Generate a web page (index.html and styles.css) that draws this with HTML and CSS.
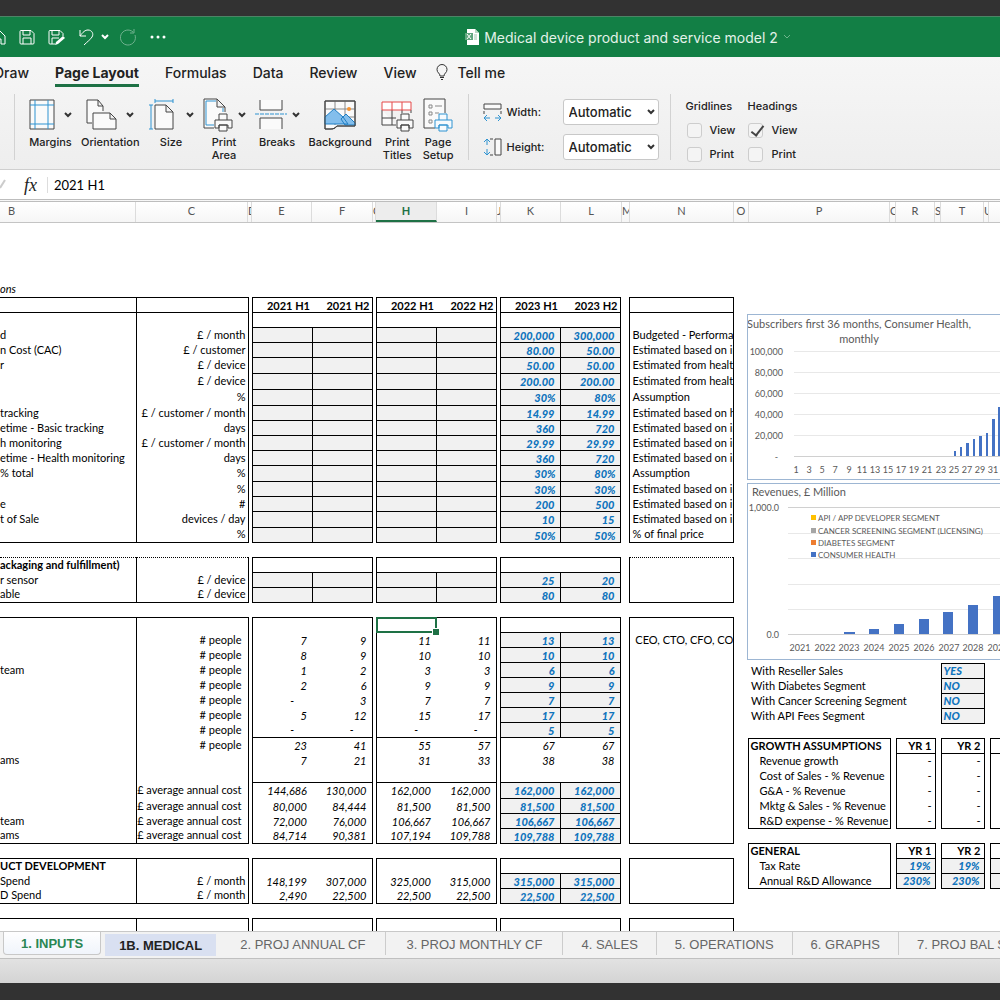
FILE: index.html
```html
<!DOCTYPE html>
<html lang="en">
<head>
    <meta charset="UTF-8">
    <meta name="viewport" content="width=device-width, initial-scale=1.0">
    <title>Medical device product and service model 2</title>
    <link rel="stylesheet" href="styles.css">
</head>
<body>
    <header class="titlebar">
        <div class="quick-actions">
            <button class="quick-btn home" aria-label="Home"><svg width="6" height="18" viewBox="0 0 6 18"><path d="M0 3l5 5v8H1v-5H0"/></svg></button>
            <button class="quick-btn" aria-label="Save"><svg width="16" height="18" viewBox="0 0 16 18"><path d="M1 3.500q0-1 1-1h10l3 3V15q0 1-1 1H2q-1 0-1-1zM4 2.500V7h7V2.500M4 16v-6h8v6"/></svg></button>
            <button class="quick-btn" aria-label="Save as"><svg width="18" height="18" viewBox="0 0 18 18"><path d="M7 16H2q-1 0-1-1V3.500q0-1 1-1h10l3 3V8M4 2.500V7h7V2.500M4 16v-6h7"/><path class="solid" d="M15 8l2 2-7 6-3 1 1-3z"/></svg></button>
            <button class="quick-btn undo" aria-label="Undo"><svg width="16" height="18" viewBox="0 0 16 18"><path d="M1 2v6h6M1 8c3-4 5-6 8-6 4 0 6 4 4 7-1 2-5 5-8 8"/></svg></button>
            <button class="quick-btn history" aria-label="Undo history"><svg width="8" height="6" viewBox="0 0 8 6"><path class="thick" d="M1 1l3 3 3-3"/></svg></button>
            <button class="quick-btn faded" aria-label="Redo" disabled><svg width="18" height="18" viewBox="0 0 18 18"><path d="M14 4A7.500 7.500 0 1 0 16 7M15 1v4h-4"/></svg></button>
            <button class="quick-btn" aria-label="More"><svg width="16" height="4" viewBox="0 0 16 4"><g class="solid"><circle cx="2" cy="2" r="1.500"/><circle cx="8" cy="2" r="1.500"/><circle cx="14" cy="2" r="1.500"/></g></svg></button>
        </div>
        <div class="doc-title">
            <svg width="14" height="16" viewBox="0 0 14 16"><path fill="#fff" d="M2 0h8l4 4v12H2z"/><path fill="#b7d8c4" d="M10 0v4h4z"/><path fill="#5fa67e" d="M0 4h8v7H0z"/><path stroke="#fff" d="M2 5l4 5M6 5l-4 5"/><path stroke="#9cc9ae" d="M9 6h3M9 8h3M9 10h3"/></svg>
            <h1>Medical device product and service model 2</h1>
            <svg width="8" height="6" viewBox="0 0 8 6"><path fill="none" stroke="#6fb48c" d="M1 1l3 3 3-3"/></svg>
        </div>
    </header>

    <section class="ribbon">
        <nav class="ribbon-tabs">
            <button>Draw</button>
            <button class="active">Page Layout</button>
            <button>Formulas</button>
            <button>Data</button>
            <button>Review</button>
            <button>View</button>
            <button class="tell-me"><svg width="12" height="16" viewBox="0 0 12 16"><path fill="none" stroke="#333" d="M4 12c0-3-3-3-3-6.500a5 5 0 0 1 10 0C11 9 8 9 8 12zM4 13.500h4M5 15.500h2"/></svg>Tell me</button>
        </nav>

        <div class="ribbon-body">
            <div class="tools">
                <button class="tool">
                    <span class="tool-icon">
                        <svg width="26" height="32" viewBox="0 0 26 32"><path class="page" d="M1 1h24v29H1z"/><path class="blue" d="M6 1v29M19 1v29M1 6h24M1 25h24"/></svg>
                        <svg class="chev" width="8" height="6" viewBox="0 0 8 6"><path d="M1 1l3 3 3-3"/></svg>
                    </span>
                    Margins
                </button>
                <button class="tool">
                    <span class="tool-icon">
                        <svg width="31" height="32" viewBox="0 0 31 32"><path class="page" d="M6 24H1V1h11l5 6v5M12 1v6h5"/><path class="page" d="M7 14h17l6 6v10H7zM24 14v6h6"/></svg>
                        <svg class="chev" width="8" height="6" viewBox="0 0 8 6"><path d="M1 1l3 3 3-3"/></svg>
                    </span>
                    Orientation
                </button>
                <button class="tool">
                    <span class="tool-icon wide">
                        <svg width="25" height="32" viewBox="0 0 25 32"><path class="page" d="M6 6h11l7 7v17H6zM17 6v7h7"/><path class="blue" d="M6 2h18M6 0v4M24 0v4M2 6v24M0 6h4M0 30h4"/></svg>
                        <svg class="chev" width="8" height="6" viewBox="0 0 8 6"><path d="M1 1l3 3 3-3"/></svg>
                    </span>
                    Size
                </button>
                <button class="tool">
                    <span class="tool-icon narrow">
                        <svg width="30" height="34" viewBox="0 0 30 34"><path class="page" d="M11 30H1V1h13l8 8v5M14 1v8h8"/><path class="blue" d="M11 27H3V3h10M20 10v4"/><path class="page" d="M16 22v-6h8v6M12 22h17v8h-4v-3H16v3h-4zM16 27h8v6h-8z"/></svg>
                        <svg class="chev" width="8" height="6" viewBox="0 0 8 6"><path d="M1 1l3 3 3-3"/></svg>
                    </span>
                    Print<br>Area
                </button>
                <button class="tool">
                    <span class="tool-icon narrow">
                        <svg width="32" height="32" viewBox="0 0 32 32"><path class="page" d="M5 1v10h22V1M5 30V19h22v11"/><path class="blue" stroke-dasharray="4 1" d="M0 15h32"/></svg>
                        <svg class="chev" width="8" height="6" viewBox="0 0 8 6"><path d="M1 1l3 3 3-3"/></svg>
                    </span>
                    Breaks
                </button>
                <button class="tool">
                    <span class="tool-icon">
                        <svg width="32" height="30" viewBox="0 0 32 30"><path class="page" d="M1 1h30v25H13l-4 3H1z"/><path class="grey" d="M11 1v24M21 1v24M1 9h30M1 17h30"/><path fill="#83beec" stroke="#1f7fc4" d="M1 24v-7l9-8 9 8 5 7zM17 19l5-5 9 9v2H21z"/><circle cx="25" cy="9" r="2" fill="#f59331"/><path class="line" d="M1 1h30v25H13q-1 3-6 3H1z"/></svg>
                    </span>
                    Background
                </button>
                <button class="tool">
                    <span class="tool-icon">
                        <svg width="33" height="34" viewBox="0 0 33 34"><path class="page" d="M1 12v15h14M1 20h14M11 12v15M21 12v3M30 12v3"/><path class="red" d="M1 4h29v8H1zM11 4v8M21 4v8"/><path class="page" d="M20 22v-6h8v6M16 22h16v8h-4v-3h-8v3h-4zM20 27h8v6h-8z"/></svg>
                    </span>
                    Print<br>Titles
                </button>
                <button class="tool">
                    <span class="tool-icon">
                        <svg width="30" height="34" viewBox="0 0 30 34"><path class="page" d="M12 30H1V1h21v14"/><path class="grey" d="M6 7h3v3H6zM6 14h3v3H6zM6 22h3v3H6zM12 8h7M12 15h4"/><path class="page blue" d="M16 22v-6h8v6M12 22h17v8h-4v-3H16v3h-4zM16 27h8v6h-8z"/></svg>
                    </span>
                    Page<br>Setup
                </button>
            </div>

            <div class="scaling">
                <svg width="20" height="20" viewBox="0 0 20 20"><path class="page" d="M1 2h17v5H1z"/><path class="line" d="M1 9v3M18 9v3"/><path class="blue" d="M1 16h6M12 16h6M4 13l-3 3 3 3M15 13l3 3-3 3"/></svg>
                <label for="scaleWidth">Width:</label>
                <span class="select-box">
                    <select id="scaleWidth"><option>Automatic</option></select>
                    <svg class="chev" width="8" height="6" viewBox="0 0 8 6"><path d="M1 1l3 3 3-3"/></svg>
                </span>
                <svg width="20" height="20" viewBox="0 0 20 20"><path class="page" d="M12 2h6v16h-6z"/><path class="line" d="M7 2h3M7 18h3"/><path class="blue" d="M4 2v6M4 12v6M1 5l3-3 3 3M1 15l3 3 3-3"/></svg>
                <label for="scaleHeight">Height:</label>
                <span class="select-box">
                    <select id="scaleHeight"><option>Automatic</option></select>
                    <svg class="chev" width="8" height="6" viewBox="0 0 8 6"><path d="M1 1l3 3 3-3"/></svg>
                </span>
            </div>

            <div class="checks">
                <div class="check-group">
                    <span>Gridlines</span>
                    <label><input type="checkbox">View</label>
                    <label><input type="checkbox">Print</label>
                </div>
                <div class="check-group">
                    <span>Headings</span>
                    <label><input type="checkbox" checked>View</label>
                    <label><input type="checkbox">Print</label>
                </div>
            </div>
        </div>
    </section>

    <div class="formula-bar">
        <svg width="6" height="12" viewBox="0 0 6 12"><path fill="none" stroke="#ccc" stroke-width="2" d="M0 9l5-8"/></svg>
        <label class="fx" for="formula">fx</label>
        <input id="formula" type="text" value="2021 H1">
    </div>

    <div class="col-heads">
        <span>B</span><span>C</span><span>D</span><span>E</span><span>F</span><span>G</span><span class="current">H</span><span>I</span><span>J</span><span>K</span><span>L</span><span>M</span><span>N</span><span>O</span><span>P</span><span>Q</span><span>R</span><span>S</span><span>T</span><span>U</span><span>V</span>
    </div>

    <main class="sheet">
        <table class="grid main-grid">
            <colgroup>
                <col class="w-b"><col class="w-c"><col class="w-gap"><col class="w-num"><col class="w-num"><col class="w-gap"><col class="w-num"><col class="w-num"><col class="w-gap"><col class="w-num"><col class="w-num"><col class="w-m"><col class="w-n">
            </colgroup>
            <tbody>
                <tr class="lead"><td></td></tr>
                <tr><td><i>ons</i></td></tr>
            </tbody>

            <!-- Consumer health inputs -->
            <tbody class="block">
                <tr class="periods"><td></td><td></td><td></td><th>2021 H1</th><th>2021 H2</th><td></td><th>2022 H1</th><th>2022 H2</th><td></td><th>2023 H1</th><th>2023 H2</th><td></td><td></td></tr>
                <tr class="blank"><td></td><td></td><td></td><td></td><td></td><td></td><td></td><td></td><td></td><td></td><td></td><td></td><td></td></tr>
                <tr class="in"><td>d</td><td>£ / month</td><td></td><td></td><td></td><td></td><td></td><td></td><td></td><td>200,000</td><td>300,000</td><td></td><td>Budgeted - Performance marketing</td></tr>
                <tr class="in"><td>n Cost (CAC)</td><td>£ / customer</td><td></td><td></td><td></td><td></td><td></td><td></td><td></td><td>80.00</td><td>50.00</td><td></td><td>Estimated based on industry</td></tr>
                <tr class="in tall"><td>r</td><td>£ / device</td><td></td><td></td><td></td><td></td><td></td><td></td><td></td><td>50.00</td><td>50.00</td><td></td><td>Estimated from healthcare</td></tr>
                <tr class="in tall"><td></td><td>£ / device</td><td></td><td></td><td></td><td></td><td></td><td></td><td></td><td>200.00</td><td>200.00</td><td></td><td>Estimated from healthcare</td></tr>
                <tr class="in tall pct"><td></td><td>%</td><td></td><td></td><td></td><td></td><td></td><td></td><td></td><td>30%</td><td>80%</td><td></td><td>Assumption</td></tr>
                <tr class="in"><td>tracking</td><td>£ / customer / month</td><td></td><td></td><td></td><td></td><td></td><td></td><td></td><td>14.99</td><td>14.99</td><td></td><td>Estimated based on healthcare</td></tr>
                <tr class="in"><td>etime - Basic tracking</td><td>days</td><td></td><td></td><td></td><td></td><td></td><td></td><td></td><td>360</td><td>720</td><td></td><td>Estimated based on industry</td></tr>
                <tr class="in"><td>h monitoring</td><td>£ / customer / month</td><td></td><td></td><td></td><td></td><td></td><td></td><td></td><td>29.99</td><td>29.99</td><td></td><td>Estimated based on industry</td></tr>
                <tr class="in"><td>etime - Health monitoring</td><td>days</td><td></td><td></td><td></td><td></td><td></td><td></td><td></td><td>360</td><td>720</td><td></td><td>Estimated based on industry</td></tr>
                <tr class="in tall pct"><td>% total</td><td>%</td><td></td><td></td><td></td><td></td><td></td><td></td><td></td><td>30%</td><td>80%</td><td></td><td>Assumption</td></tr>
                <tr class="in pct"><td></td><td>%</td><td></td><td></td><td></td><td></td><td></td><td></td><td></td><td>30%</td><td>30%</td><td></td><td>Estimated based on industry</td></tr>
                <tr class="in"><td>e</td><td>#</td><td></td><td></td><td></td><td></td><td></td><td></td><td></td><td>200</td><td>500</td><td></td><td>Estimated based on industry</td></tr>
                <tr class="in tall"><td>t of Sale</td><td>devices / day</td><td></td><td></td><td></td><td></td><td></td><td></td><td></td><td>10</td><td>15</td><td></td><td>Estimated based on industry</td></tr>
                <tr class="in pct"><td></td><td>%</td><td></td><td></td><td></td><td></td><td></td><td></td><td></td><td>50%</td><td>50%</td><td></td><td>% of final price</td></tr>
            </tbody>
            <tbody><tr><td></td></tr></tbody>

            <!-- Device costs -->
            <tbody class="block dotted">
                <tr><td><b>ackaging and fulfillment)</b></td><td></td><td></td><td></td><td></td><td></td><td></td><td></td><td></td><td></td><td></td><td></td><td></td></tr>
                <tr class="in"><td>r sensor</td><td>£ / device</td><td></td><td></td><td></td><td></td><td></td><td></td><td></td><td>25</td><td>20</td><td></td><td></td></tr>
                <tr class="in"><td>able</td><td>£ / device</td><td></td><td></td><td></td><td></td><td></td><td></td><td></td><td>80</td><td>80</td><td></td><td></td></tr>
            </tbody>
            <tbody><tr><td></td></tr></tbody>

            <!-- Team -->
            <tbody class="block team">
                <tr><td></td><td></td><td></td><td></td><td></td><td></td><td class="selected"></td><td></td><td></td><td></td><td></td><td></td><td></td></tr>
                <tr class="plan"><td></td><td># people</td><td></td><td>7</td><td>9</td><td></td><td>11</td><td>11</td><td></td><td>13</td><td>13</td><td></td><td>&nbsp;CEO, CTO, CFO, COO, CMO</td></tr>
                <tr class="plan"><td></td><td># people</td><td></td><td>8</td><td>9</td><td></td><td>10</td><td>10</td><td></td><td>10</td><td>10</td><td></td><td></td></tr>
                <tr class="plan"><td>team</td><td># people</td><td></td><td>1</td><td>2</td><td></td><td>3</td><td>3</td><td></td><td>6</td><td>6</td><td></td><td></td></tr>
                <tr class="plan"><td></td><td># people</td><td></td><td>2</td><td>6</td><td></td><td>9</td><td>9</td><td></td><td>9</td><td>9</td><td></td><td></td></tr>
                <tr class="plan"><td></td><td># people</td><td></td><td class="dash">-</td><td>3</td><td></td><td>7</td><td>7</td><td></td><td>7</td><td>7</td><td></td><td></td></tr>
                <tr class="plan"><td></td><td># people</td><td></td><td>5</td><td>12</td><td></td><td>15</td><td>17</td><td></td><td>17</td><td>17</td><td></td><td></td></tr>
                <tr class="plan"><td></td><td># people</td><td></td><td class="dash">-</td><td class="dash">-</td><td></td><td class="dash">-</td><td class="dash">-</td><td></td><td>5</td><td>5</td><td></td><td></td></tr>
                <tr class="total"><td></td><td># people</td><td></td><td>23</td><td>41</td><td></td><td>55</td><td>57</td><td></td><td>67</td><td>67</td><td></td><td></td></tr>
                <tr><td>ams</td><td></td><td></td><td>7</td><td>21</td><td></td><td>31</td><td>33</td><td></td><td>38</td><td>38</td><td></td><td></td></tr>
                <tr><td></td><td></td><td></td><td></td><td></td><td></td><td></td><td></td><td></td><td></td><td></td><td></td><td></td></tr>
                <tr class="plan total tall"><td></td><td>£ average annual cost</td><td></td><td>144,686</td><td>130,000</td><td></td><td>162,000</td><td>162,000</td><td></td><td>162,000</td><td>162,000</td><td></td><td></td></tr>
                <tr class="plan"><td></td><td>£ average annual cost</td><td></td><td>80,000</td><td>84,444</td><td></td><td>81,500</td><td>81,500</td><td></td><td>81,500</td><td>81,500</td><td></td><td></td></tr>
                <tr class="plan"><td>team</td><td>£ average annual cost</td><td></td><td>72,000</td><td>76,000</td><td></td><td>106,667</td><td>106,667</td><td></td><td>106,667</td><td>106,667</td><td></td><td></td></tr>
                <tr class="plan"><td>ams</td><td>£ average annual cost</td><td></td><td>84,714</td><td>90,381</td><td></td><td>107,194</td><td>109,788</td><td></td><td>109,788</td><td>109,788</td><td></td><td></td></tr>
            </tbody>
            <tbody><tr><td></td></tr></tbody>

            <!-- Product development -->
            <tbody class="block">
                <tr><td><b>UCT DEVELOPMENT</b></td><td></td><td></td><td></td><td></td><td></td><td></td><td></td><td></td><td></td><td></td><td></td><td></td></tr>
                <tr class="plan"><td>Spend</td><td>£ / month</td><td></td><td>148,199</td><td>307,000</td><td></td><td>325,000</td><td>315,000</td><td></td><td>315,000</td><td>315,000</td><td></td><td></td></tr>
                <tr class="plan"><td>D Spend</td><td>£ / month</td><td></td><td>2,490</td><td>22,500</td><td></td><td>22,500</td><td>22,500</td><td></td><td>22,500</td><td>22,500</td><td></td><td></td></tr>
            </tbody>
            <tbody><tr><td></td></tr></tbody>
            <tbody class="block">
                <tr><td></td><td></td><td></td><td></td><td></td><td></td><td></td><td></td><td></td><td></td><td></td><td></td><td></td></tr>
                <tr><td></td><td></td><td></td><td></td><td></td><td></td><td></td><td></td><td></td><td></td><td></td><td></td><td></td></tr>
            </tbody>
        </table>

        <div class="side">
            <svg class="chart" width="100%" height="166">
                <text class="chart-title" x="111" y="13" text-anchor="middle">Subscribers first 36 months, Consumer Health,</text>
                <text class="chart-title" x="111" y="28" text-anchor="middle">monthly</text>
                <path class="rule" d="M46 36.500h400M46 57.500h400M46 78.500h400M46 99.500h400M46 120.500h400"/>
                <path class="axis" d="M46 141.500h400"/>
                <g text-anchor="end">
                    <text x="35" y="40">100,000</text><text x="35" y="61">80,000</text><text x="35" y="82">60,000</text><text x="35" y="103">40,000</text><text x="35" y="124">20,000</text><text x="30" y="145">-</text>
                </g>
                <g text-anchor="middle">
                    <text x="48" y="158">1</text><text x="61" y="158">3</text><text x="74" y="158">5</text><text x="87" y="158">7</text><text x="101" y="158">9</text><text x="114" y="158">11</text><text x="127" y="158">13</text><text x="140" y="158">15</text><text x="153" y="158">17</text><text x="166" y="158">19</text><text x="179" y="158">21</text><text x="193" y="158">23</text><text x="206" y="158">25</text><text x="219" y="158">27</text><text x="232" y="158">29</text><text x="245" y="158">31</text>
                </g>
                <path class="bar" d="M206 141v-5h2v5zM212 141v-9h2v9zM218 141v-13h3v13zM225 141v-17h2v17zM231 141v-20h3v20zM238 141v-23h2v23zM244 141v-37h3v37zM250 141v-49h3v49z"/>
            </svg>
            <svg class="chart" width="100%" height="177">
                <text class="chart-title" x="4" y="12">Revenues, £ Million</text>
                <path class="rule" d="M40 49.500h400M40 74.500h400M40 100.500h400M40 125.500h400"/>
                <path class="axis" d="M40 23.500h400M40 150.500h400"/>
                <g text-anchor="end"><text x="31" y="27">1,000.0</text><text x="31" y="154">0.0</text></g>
                <g class="legend">
                    <path fill="#ffc000" d="M63 31h5v5h-5z"/><text x="70" y="37">API / APP DEVELOPER SEGMENT</text>
                    <path fill="#a5a5a5" d="M63 44h5v5h-5z"/><text x="70" y="50">CANCER SCREENING SEGMENT (LICENSING)</text>
                    <path fill="#ed7d31" d="M63 56h5v5h-5z"/><text x="70" y="62">DIABETES SEGMENT</text>
                    <path fill="#4472c4" d="M63 68h5v5h-5z"/><text x="70" y="74">CONSUMER HEALTH</text>
                </g>
                <g text-anchor="middle">
                    <text x="52" y="167">2021</text><text x="77" y="167">2022</text><text x="101" y="167">2023</text><text x="126" y="167">2024</text><text x="151" y="167">2025</text><text x="176" y="167">2026</text><text x="201" y="167">2027</text><text x="225" y="167">2028</text><text x="250" y="167">2029</text>
                </g>
                <path class="bar" d="M96 150v-2h11v2zM121 150v-5h10v5zM146 150v-10h10v10zM171 150v-15h10v15zM195 150v-22h10v22zM220 150v-29h10v29zM245 150v-38h10v38z"/>
            </svg>

            <table class="grid side-grid">
                <colgroup><col class="w-p"><col class="w-q"><col class="w-r"><col class="w-q"><col class="w-t"><col class="w-q"><col class="w-t"></colgroup>
                <tbody class="options">
                    <tr><td>With Reseller Sales</td><td></td><td></td><td></td><td>YES</td></tr>
                    <tr><td>With Diabetes Segment</td><td></td><td></td><td></td><td>NO</td></tr>
                    <tr><td>With Cancer Screening Segment</td><td></td><td></td><td></td><td>NO</td></tr>
                    <tr><td>With API Fees Segment</td><td></td><td></td><td></td><td>NO</td></tr>
                </tbody>
                <tbody><tr><td></td></tr></tbody>
                <tbody class="years">
                    <tr><th>GROWTH ASSUMPTIONS</th><td></td><th>YR 1</th><td></td><th>YR 2</th><td></td><th></th></tr>
                    <tr><td>Revenue growth</td><td></td><td>-</td><td></td><td>-</td><td></td><td></td></tr>
                    <tr><td>Cost of Sales - % Revenue</td><td></td><td>-</td><td></td><td>-</td><td></td><td></td></tr>
                    <tr><td>G&amp;A - % Revenue</td><td></td><td>-</td><td></td><td>-</td><td></td><td></td></tr>
                    <tr><td>Mktg &amp; Sales - % Revenue</td><td></td><td>-</td><td></td><td>-</td><td></td><td></td></tr>
                    <tr><td>R&amp;D expense - % Revenue</td><td></td><td>-</td><td></td><td>-</td><td></td><td></td></tr>
                </tbody>
                <tbody><tr><td></td></tr></tbody>
                <tbody class="years rates">
                    <tr><th>GENERAL</th><td></td><th>YR 1</th><td></td><th>YR 2</th><td></td><th></th></tr>
                    <tr><td>Tax Rate</td><td></td><td>19%</td><td></td><td>19%</td><td></td><td></td></tr>
                    <tr><td>Annual R&amp;D Allowance</td><td></td><td>230%</td><td></td><td>230%</td><td></td><td></td></tr>
                </tbody>
            </table>
        </div>
    </main>

    <nav class="sheet-tabs">
        <button class="active">1. INPUTS</button>
        <button class="marked">1B. MEDICAL</button>
        <button>2. PROJ ANNUAL CF</button>
        <button>3. PROJ MONTHLY CF</button>
        <button>4. SALES</button>
        <button>5. OPERATIONS</button>
        <button>6. GRAPHS</button>
        <button>7. PROJ BAL SHEET</button>
    </nav>
    <footer class="status-bar"></footer>
</body>
</html>
```
FILE: styles.css
```css
* {
    margin: 0;
    padding: 0;
    box-sizing: border-box;
}

body {
    display: flex;
    flex-direction: column;
    height: 100vh;
    padding: 16px 0 17px;
    overflow: hidden;
    background: #323232;
    font-family: Inter, sans-serif;
    color: #222;
}

button {
    border: none;
    background: none;
    font: inherit;
    color: inherit;
    white-space: nowrap;
}

svg {
    display: block;
    flex-shrink: 0;
}

/* Title bar */
.titlebar {
    display: flex;
    align-items: center;
    height: 41px;
    flex-shrink: 0;
    background: #127f45;
    border-top: 1px solid #4d8466;
}

.quick-actions {
    display: flex;
    align-items: center;
    gap: 13px;
}

.quick-btn svg {
    fill: none;
    stroke: #fff;
}

.quick-btn .solid {
    fill: #fff;
    stroke: none;
}

.quick-btn .thick {
    stroke-width: 2;
}

.quick-btn.undo {
    margin-right: -7px;
}

.quick-btn.history {
    margin-right: -3px;
}

.faded {
    opacity: 0.4;
}

.doc-title {
    display: flex;
    align-items: center;
    justify-content: center;
    flex: 1;
    gap: 5px;
    padding-left: 90px;
    color: #e3f2e9;
}

.doc-title h1 {
    font-size: 14px;
    font-weight: 400;
    white-space: nowrap;
}

/* Ribbon */
.ribbon {
    flex-shrink: 0;
    height: 113px;
    background: linear-gradient(#f6f6f6, #eeeeee);
    border-bottom: 1px solid #cfcfcf;
}

.ribbon-tabs {
    display: flex;
    gap: 26px;
    height: 30px;
    margin-left: -6px;
    font-size: 14px;
    font-weight: 500;
}

.ribbon-tabs button {
    border-bottom: 3px solid transparent;
    padding-top: 3px;
}

.ribbon-tabs .active {
    font-weight: 700;
    border-color: #1e7145;
}

.ribbon-tabs .tell-me {
    display: flex;
    align-items: center;
    gap: 10px;
    margin-left: -7px;
}

.ribbon-body {
    display: flex;
    height: 66px;
    margin-top: 7px;
    margin-left: 14px;
    border-left: 1px solid #d2d2d2;
    font-size: 11px;
    font-weight: 500;
}

.tools {
    display: flex;
    align-items: flex-start;
    gap: 9px;
    padding: 4px 14px;
    border-right: 1px solid #d2d2d2;
}

.tool {
    line-height: 13px;
    text-align: center;
}

.tool-icon {
    display: flex;
    align-items: center;
    justify-content: center;
    gap: 9px;
    height: 34px;
    margin-bottom: 4px;
}

.tool-icon.wide {
    gap: 12px;
}

.tool-icon.narrow {
    gap: 5px;
}

.page {
    fill: #fafafa;
    stroke: #444;
}

.line {
    fill: none;
    stroke: #444;
}

.grey {
    fill: none;
    stroke: #888;
}

.blue {
    fill: none;
    stroke: #2e93d1;
}

.page.blue {
    fill: #f6fafd;
}

.red {
    fill: #fff;
    stroke: #e54848;
}

.chev {
    fill: none;
    stroke: #333;
    stroke-width: 2;
}

.scaling {
    display: grid;
    grid-template-columns: 20px 52px 96px;
    gap: 9px 4px;
    align-items: center;
    align-content: start;
    padding: 5px 11px 0 14px;
    border-right: 1px solid #d2d2d2;
}

.select-box {
    position: relative;
}

.select-box select {
    appearance: none;
    display: block;
    width: 100%;
    height: 26px;
    padding-left: 5px;
    border: 1px solid #c8c8c8;
    border-radius: 3px;
    background: #fff;
    font: 500 13px Inter, sans-serif;
    color: #222;
}

.select-box .chev {
    position: absolute;
    right: 4px;
    top: 10px;
}

.checks {
    display: flex;
    gap: 12px;
    padding: 5px 15px;
}

.check-group {
    display: flex;
    flex-direction: column;
    gap: 9px;
    line-height: 15px;
}

.check-group label {
    display: flex;
    align-items: center;
    gap: 8px;
    padding-left: 1px;
}

.check-group input {
    appearance: none;
    position: relative;
    width: 15px;
    height: 15px;
    border: 1px solid #cdcdcd;
    border-radius: 3px;
    background: #f4f4f4;
}

.check-group input:checked::after {
    content: "";
    position: absolute;
    left: 5px;
    top: -1px;
    width: 5px;
    height: 11px;
    border: solid #444;
    border-width: 0 2px 2px 0;
    transform: rotate(38deg);
}

/* Formula bar */
.formula-bar {
    display: flex;
    align-items: center;
    flex-shrink: 0;
    height: 29px;
    background: #fff;
}

.fx {
    width: 42px;
    padding-left: 18px;
    border-right: 1px solid #ddd;
    font: italic 18px/16px "Liberation Serif", serif;
}

.formula-bar input {
    flex: 1;
    padding-left: 6px;
    border: none;
    font: 13px Lato, sans-serif;
    color: #000;
}

/* Column headings */
.col-heads {
    display: grid;
    grid-template-columns: 136px 112px 4px 60px 61px 3px 61px 60px 4px 60px 61px 8px 104px 15px 141px 6px 39px 6px 43px 5px 43px;
    flex-shrink: 0;
    height: 24px;
    overflow: hidden;
    border-top: 3px double #bdbdbd;
    border-bottom: 1px solid #c4c4c4;
    background: linear-gradient(#fff, #f6f6f6);
    font: 11px/18px Lato, sans-serif;
    color: #555;
}

.col-heads span {
    display: flex;
    justify-content: safe center;
    overflow: hidden;
    border-right: 1px solid #dcdcdc;
}

.col-heads span:first-child {
    padding-right: 112px;
}

.col-heads .current {
    border-bottom: 2px solid #1e7145;
    background: #ededed;
    font-weight: 700;
    color: #1e7145;
}

/* Sheet */
.sheet {
    display: flex;
    align-items: flex-start;
    flex: 1;
    min-height: 0;
    overflow: hidden;
    background: #fff;
    font-family: Lato, sans-serif;
    font-size: 11px;
    line-height: 13px;
    color: #000;
}

.grid {
    flex-shrink: 0;
    table-layout: fixed;
    border-collapse: collapse;
}

.main-grid {
    width: 733px;
}

.w-b { width: 136px; }
.w-c { width: 112px; }
.w-gap { width: 4px; }
.w-num { width: 60px; }
.w-m { width: 9px; }
.w-n { width: 104px; }
.w-p { width: 142px; }
.w-q { width: 6px; }
.w-r { width: 39px; }
.w-t { width: 43px; }

.grid tr {
    height: 15px;
}

.grid .tall {
    height: 16px;
}

.grid .lead {
    height: 59px;
}

.grid td,
.grid th {
    padding: 0 0 1px;
    line-height: 13px;
    white-space: nowrap;
}

.main-grid td {
    overflow: hidden;
}

.block td:nth-child(2),
.block td:nth-child(n+4):nth-child(-n+11),
.block th {
    text-align: right;
    padding-right: 5px;
}

.block td:nth-child(2) {
    padding-right: 2px;
    border: solid #000;
    border-width: 0 1px;
}

.block.team td:nth-child(2) {
    padding-right: 6px;
}

/* Figures sit one pixel lower than labels */
.block td:nth-child(n+4):nth-child(-n+11) {
    padding: 1px 5px 0 0;
    font-style: italic;
}

.block .pct td:nth-child(n+10):nth-child(-n+11) {
    padding-right: 4px;
}

.block th {
    padding: 1px 2px 0 0;
}

.block .plan .dash:nth-child(n+4):nth-child(-n+11) {
    padding-right: 18px;
}

.block td:nth-child(13) {
    padding-left: 3px;
    border-left: 1px solid #000;
    border-right: 1px solid #000;
}

.block tr > :nth-child(3n+4):nth-child(-n+10) {
    border-left: 1px solid #000;
}

.block tr > :nth-child(3n+5):nth-child(-n+11) {
    border-right: 1px solid #000;
}

/* Outline of every block, gap columns stay open */
.block tr:first-child > :not(:nth-child(3n)),
.block .periods > :not(:nth-child(3n)),
.block .total > :nth-child(n+4):nth-child(-n+11):not(:nth-child(3n)) {
    border-top: 1px solid #000;
}

.block tr:last-child > :not(:nth-child(3n)),
.block .periods > :not(:nth-child(3n)) {
    border-bottom: 1px solid #000;
}

.block.dotted tr:first-child > :first-child,
.block.dotted tr:first-child > :nth-child(2),
.block.dotted tr:first-child > :nth-child(13) {
    border-top-style: dotted;
}

/* Input cells */
.block .in > :nth-child(n+4):nth-child(-n+11):not(:nth-child(3n)),
.block .plan > :nth-child(n+10):nth-child(-n+11) {
    border: 1px solid #000;
    background: #f1f1f1;
}

.block .in > :nth-child(n+10):nth-child(-n+11),
.block .plan > :nth-child(n+10):nth-child(-n+11) {
    font-weight: 900;
    color: #0f74bd;
}

.main-grid .selected {
    position: relative;
    overflow: visible;
}

.selected::before {
    content: "";
    position: absolute;
    inset: -1px;
    border: 2px solid #1e7145;
}

.selected::after {
    content: "";
    position: absolute;
    right: -3px;
    bottom: -3px;
    width: 6px;
    height: 6px;
    border: solid #fff;
    border-width: 1px 0 0 1px;
    background: #1e7145;
}

/* Charts and assumptions */
.side {
    flex: 1;
    min-width: 0;
    margin-left: 13px;
    padding-top: 91px;
    overflow: hidden;
}

.chart {
    margin-bottom: 3px;
    border: 1px solid #9db6d3;
    border-right: none;
    font-size: 9px;
}

.chart text {
    fill: #595959;
}

.chart .chart-title {
    font-size: 11px;
}

.chart .legend {
    font-size: 8px;
}

.rule {
    stroke: #e8e8e8;
}

.axis {
    stroke: #d0d0d0;
}

.bar {
    fill: #4472c4;
}

.side-grid {
    width: 285px;
    margin-left: 1px;
}

.options td:first-child {
    padding-left: 3px;
}

.options td:nth-child(5) {
    padding-left: 2px;
    border: 1px solid #000;
    background: #f1f1f1;
    font-weight: 900;
    font-style: italic;
    color: #0f74bd;
}

.years tr > :nth-child(odd) {
    border: solid #000;
    border-width: 0 1px;
}

.years tr > :nth-child(n+2) {
    text-align: right;
    padding-right: 3px;
}

.years th:first-child {
    padding-left: 2px;
    text-align: left;
}

.years td:first-child {
    padding-left: 11px;
}

.years tr:first-child > :nth-child(odd) {
    border-top-width: 1px;
}

.years tr:last-child > :nth-child(odd),
.years th:nth-child(n+2):nth-child(odd) {
    border-bottom-width: 1px;
}

.rates td:nth-child(n+2):nth-child(odd) {
    padding-right: 4px;
    border-width: 1px;
    background: #f1f1f1;
    font-weight: 900;
    font-style: italic;
    color: #0f74bd;
}

/* Bottom tabs */
.sheet-tabs {
    display: flex;
    flex-shrink: 0;
    height: 28px;
    overflow: hidden;
    padding-left: 3px;
    border-top: 1px solid #c8c8c8;
    border-bottom: 1px solid #c0c0c0;
    background: #f2f2f2;
    font: 13px "Liberation Sans", sans-serif;
    color: #666;
}

.sheet-tabs button {
    height: 23px;
    padding: 1px 18px 0;
    border-right: 1px solid #ccc;
}

.sheet-tabs button:nth-child(3),
.sheet-tabs button:nth-child(4) {
    padding: 1px 20px 0;
}

.sheet-tabs .active {
    height: 24px;
    margin-top: -1px;
    padding: 2px 17px 0;
    border: 1px solid #c8c8c8;
    border-top: none;
    border-radius: 0 0 4px 4px;
    background: linear-gradient(#fff, #f0f4fb);
    font-weight: 700;
    color: #2a8653;
}

.sheet-tabs .marked {
    margin: 2px 4px 2px 4px;
    height: 22px;
    padding: 0 14px;
    border: none;
    background: #d9e0f1;
    font-weight: 700;
    color: #222;
}

.status-bar {
    flex-shrink: 0;
    height: 24px;
    background: linear-gradient(#e2e2e2, #d4d4d4);
}
```
